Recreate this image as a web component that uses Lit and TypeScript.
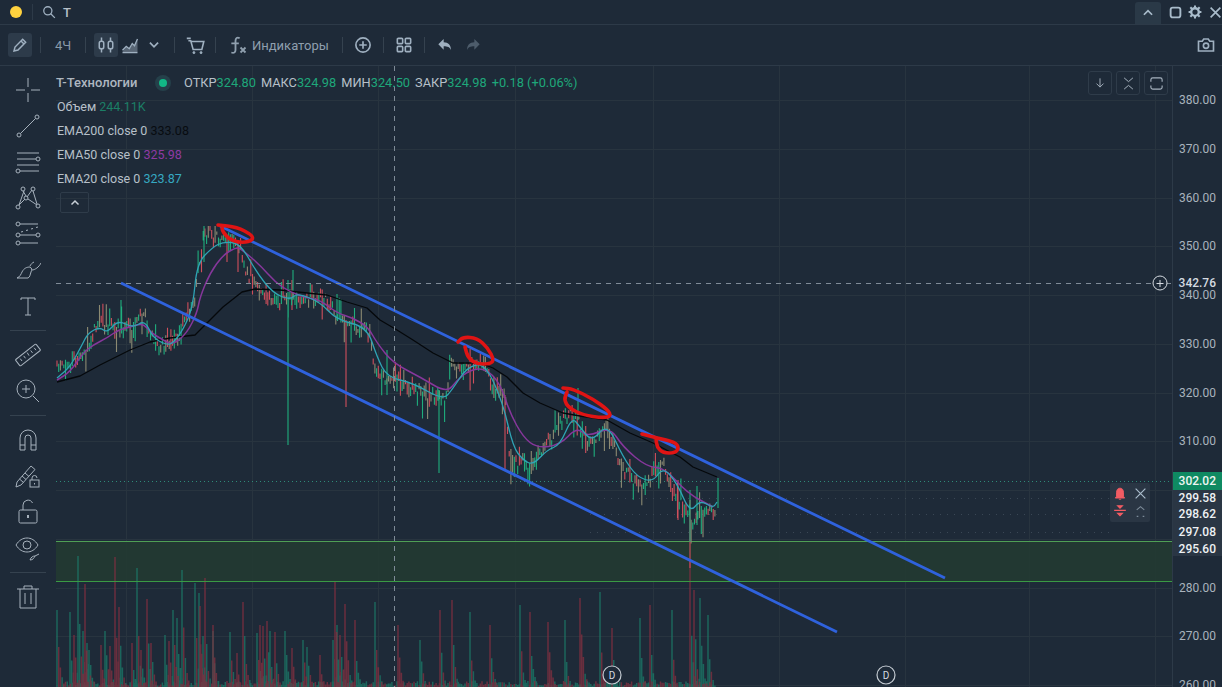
import {LitElement, html, css, svg} from 'lit';
import {customElement} from 'lit/decorators.js';

type Pt = [number, number];

const CHART_X = 56;
const CHART_Y = 66;
const priceY = (p: number) => 100 + (380 - p) * 4.875;

const PRICE: Pt[] = [[57,368],[65,362],[78,360],[86,348],[92,335],[100,322],[110,328],[125,328],[135,325],[140,310],[147,322],[155,340],[165,348],[175,345],[180,330],[187,315],[195,305],[198,270],[203,240],[208,232],[215,238],[225,240],[235,240],[240,245],[245,270],[255,285],[265,295],[280,303],[290,298],[300,303],[313,297],[325,298],[333,310],[345,325],[355,325],[370,335],[375,370],[385,380],[395,380],[410,385],[425,395],[445,400],[452,365],[465,368],[485,360],[490,385],[505,395],[510,460],[525,465],[535,465],[550,440],[570,410],[580,425],[590,445],[605,425],[612,440],[620,465],[635,482],[650,480],[662,460],[670,490],[685,505],[692,520],[705,510],[715,510]];
const EMA200: Pt[] = [[57,382],[80,376],[100,365],[130,350],[150,342],[170,338],[195,335],[205,325],[223,307],[242,292],[255,289],[280,290],[307,293],[327,295],[347,302],[367,308],[380,320],[397,330],[413,340],[433,353],[453,363],[480,363],[493,368],[507,377],[523,393],[540,403],[563,413],[580,416],[607,420],[630,433],[653,443],[680,457],[693,467],[717,477]];
const EMA50: Pt[] = [[57,380],[70,372],[83,353],[93,345],[107,338],[118,330],[130,327],[143,323],[150,332],[163,340],[173,345],[187,333],[197,313],[200,297],[210,273],[223,255],[235,248],[240,248],[260,265],[275,282],[290,292],[307,298],[320,300],[337,313],[353,318],[368,327],[377,343],[393,363],[420,377],[447,393],[457,380],[470,370],[485,368],[500,383],[510,413],[523,437],[537,448],[560,445],[577,427],[587,437],[610,427],[623,447],[647,467],[665,468],[687,493],[713,507]];
const EMA20: Pt[] = [[57,378],[70,367],[82,345],[88,333],[100,327],[107,333],[118,320],[133,328],[145,320],[153,338],[167,345],[173,343],[183,330],[193,307],[197,263],[213,247],[223,242],[240,243],[257,273],[273,293],[290,300],[297,293],[320,302],[337,320],[367,327],[377,357],[387,377],[413,383],[443,400],[452,390],[467,367],[485,363],[503,403],[513,447],[523,460],[533,465],[547,450],[560,445],[572,417],[580,427],[592,442],[607,423],[623,457],[637,477],[653,482],[663,467],[677,483],[690,513],[700,500],[713,508],[717,502]];

const RED_MARKS: Pt[][] = [
  [[218,225],[237,227],[252,235],[253,240],[243,243],[230,240],[223,232],[222,228]],
  [[458,342],[463,337],[477,338],[488,348],[494,360],[490,364],[477,364],[468,358],[465,347]],
  [[563,388],[573,389],[593,399],[608,410],[611,416],[603,418],[583,415],[569,408],[564,400],[567,392]],
  [[642,434],[657,438],[675,442],[679,448],[675,453],[663,453],[657,447],[656,439]],
];

// long wicks that stick out of the candle mass
const SPIKES_UP: [number, number, number][] = [[288,280,445],[293,270,300],[337,294,320],[387,350,395],[439,390,473],[690,490,542],[718,478,508],[697,486,525],[578,388,420],[121,300,330],[204,226,262]];
const SPIKES_DOWN: [number, number, number][] = [[346,320,407],[690,500,568],[292,280,310],[238,240,272],[505,395,470],[678,480,520]];

const VOL_UP: Pt[] = [[57,610],[70,612],[78,556],[83,631],[87,643],[89,650],[105,631],[137,568],[165,635],[173,610],[177,618],[182,570],[195,583],[199,593],[203,636],[213,631],[230,632],[257,633],[270,631],[285,631],[303,640],[307,647],[333,640],[337,625],[375,602],[420,640],[470,612],[520,605],[565,620],[600,592],[640,618],[672,610],[700,598],[708,615]];
const VOL_DOWN: Pt[] = [[74,635],[85,584],[101,645],[110,646],[115,557],[119,607],[132,643],[141,650],[147,599],[151,643],[169,641],[200,606],[205,578],[213,625],[237,653],[243,602],[260,625],[263,626],[267,621],[275,632],[292,648],[320,655],[335,581],[340,635],[345,604],[355,620],[398,625],[440,610],[452,600],[490,625],[530,612],[548,622],[580,598],[612,628],[650,605],[690,560],[694,590]];

const linePath = (pts: Pt[]) => 'M' + pts.map(p => p.join(' ')).join('L');

const smooth = (pts: Pt[]) => {
  let d = `M${pts[0][0]} ${pts[0][1]}`;
  for (let i = 1; i < pts.length; i++) {
    const [x0, y0] = pts[i - 1];
    const [x1, y1] = pts[i];
    d += `Q${x0} ${y0} ${(x0 + x1) / 2} ${(y0 + y1) / 2}`;
  }
  return d + `L${pts[pts.length - 1].join(' ')}`;
};

const rng = (seed: number) => () => {
  seed = (seed * 1664525 + 1013904223) >>> 0;
  return seed / 4294967296;
};

const interp = (pts: Pt[], x: number) => {
  for (let i = 1; i < pts.length; i++) {
    if (x <= pts[i][0]) {
      const t = (x - pts[i - 1][0]) / (pts[i][0] - pts[i - 1][0]);
      return pts[i - 1][1] + t * (pts[i][1] - pts[i - 1][1]);
    }
  }
  return pts[pts.length - 1][1];
};

// highest a wick may reach: the candles stay under the upper channel line
const ceiling = (x: number) => {
  if (x < 190) return 300;
  if (x < 220) return 226;
  const line = 226 + 0.484 * (x - 220);
  return x >= 245 && x < 440 ? line + 14 : line + 2;
};

function buildCandles() {
  const r = rng(7);
  let up = '';
  let down = '';
  let mix = '';
  for (let x = 57; x <= 716; x += 1.7) {
    const c = interp(PRICE, x) + (r() - 0.5) * 11;
    const next = interp(PRICE, x + 3);
    const kind = r();
    const bias = next < c ? 0.5 : 0.2;
    const top = Math.max(ceiling(x), c - 1 - r() * 6 - (r() < 0.18 ? 6 + r() * 12 : 0));
    const bottom = Math.max(top + 2, c + 1 + r() * 6 + (r() < 0.18 ? 6 + r() * 12 : 0));
    const seg = `M${x.toFixed(1)} ${top.toFixed(1)}V${bottom.toFixed(1)}`;
    if (kind < bias) up += seg;
    else if (kind < bias + 0.3) mix += seg;
    else down += seg;
  }
  SPIKES_UP.forEach(([x, a, b]) => (up += `M${x} ${a}V${b}`));
  SPIKES_DOWN.forEach(([x, a, b]) => (down += `M${x} ${a}V${b}`));
  return {up, down, mix};
}

function buildVolume() {
  const r = rng(31);
  let up = '';
  let down = '';
  const bar = (x: number, h: number, isUp: boolean) => {
    const seg = `M${x.toFixed(1)} 687V${(687 - h).toFixed(1)}`;
    if (isUp) up += seg; else down += seg;
  };
  for (let x = 57; x <= 716; x += 1.7) {
    bar(x, 1 + r() * 5, r() < 0.5);
  }
  // every tall bar is followed by a few that fade out
  const cluster = ([x, y]: Pt, isUp: boolean) => {
    let h = 687 - y;
    bar(x, h, isUp);
    for (let k = 1; k < 6 && h > 8; k++) {
      h *= 0.35 + r() * 0.25;
      bar(x + k * 1.7, h, r() < 0.5 ? isUp : !isUp);
    }
  };
  VOL_UP.forEach(p => cluster(p, true));
  VOL_DOWN.forEach(p => cluster(p, false));
  return {up, down};
}

const candles = buildCandles();
const volume = buildVolume();

const GRID_X = [126, 252, 378, 515, 653, 779, 905, 1029, 1155];
const AXIS_PRICES = [380, 370, 360, 350, 340, 330, 320, 310, 280, 270, 260];
const MARKS = [
  {y: 498, text: '299.58'},
  {y: 514, text: '298.62'},
  {y: 532, text: '297.08'},
  {y: 549, text: '295.60'},
];

const ico = (size: number, body: unknown, vb = 24) => html`<svg class="ico" width=${size} height=${size} viewBox="0 0 ${vb} ${vb}">${body}</svg>`;

const LEFT_TOOLS = [
  [svg`<path d="M13 1v9M13 16v9M1 13h9M16 13h9"/>`],
  [svg`<path d="M5.500 20.500 20.500 5.500"/><circle cx="22" cy="4" r="2"/><circle cx="4" cy="22" r="2"/>`],
  [svg`<path d="M2 4h22M2 10h19M2 16h22M5 22h19"/><circle cx="23" cy="10" r="2"/><circle cx="3" cy="22" r="2"/>`],
  [svg`<circle cx="8" cy="4" r="2"/><circle cx="18" cy="4" r="2"/><circle cx="3" cy="22" r="2"/><circle cx="23" cy="21" r="2"/><circle cx="11" cy="13" r="2"/><path d="M8 6l3 5M4 20l6-6M12 12l5-7M9 6 4 20M13 14l9 6M18 6l4 13"/>`],
  [svg`<circle cx="3" cy="3" r="2"/><circle cx="23" cy="14" r="2"/><circle cx="3" cy="14" r="2"/><circle cx="3" cy="22" r="2"/><path d="M5 3h18M5 14h16M5 22h18"/><path d="M6 11l2-.5M11 9.500l2-.5M16 8l2-.5M21 6.500l2-.5"/>`],
  [svg`<path d="M2 21c3-1 4-4 5-6 2-4 5-5 8-5 2 1 2 3 1 5-1 3-1 5-3 6zM15 9c1-2 2-3 4-4M17 13c3 0 7-3 9-7"/>`],
  [svg`<path d="M6 7V5h14v2M13 5v17M10 22h6"/>`],
  null,
  [svg`<rect x="0" y="9" width="26" height="8" rx="1" transform="rotate(-38 13 13)"/><path d="M7 19l-1.800-2.400M10.500 16.300l-1.800-2.400M14 13.600l-1.800-3M17.500 10.900l-1.800-2.400M21 8.200l-1.800-2.400"/>`],
  [svg`<circle cx="11" cy="11" r="9"/><path d="M11 7v8M7 11h8M18 18l6 6"/>`],
  null,
  [svg`<path d="M5 23V11a8 8 0 0 1 16 0v12h-5V11a3 3 0 0 0-6 0v12zM5 18h5M16 18h5"/>`],
  [svg`<path d="M2 19 16 3l4 3.500L6 22l-5 2zM4.500 16l4 3.500M7 13l4 3.500M10 10l4 3.500"/><rect x="15" y="17" width="9" height="7"/><path d="M17 17v-2a2.500 2.500 0 0 1 5 0"/><path d="M19.500 20v1.500"/>`],
  [svg`<rect x="4" y="11" width="18" height="13" rx="1.500"/><path d="M8 11V6a5 5 0 0 1 9.500-2"/><path d="M13 16v3" stroke-width="2"/>`],
  [svg`<path d="M1 10c3-5 7-7 11-7s8 2 11 7c-3 5-7 7-11 7S4 15 1 10z"/><circle cx="12" cy="10" r="4"/><path d="M15 25c1-3 3-4 5-4-1 2-2 4-5 4zM20 21l4-2"/>`],
  null,
  [svg`<path d="M2 5h22M9 5V2h8v3M5 5v19h16V5M10 9v11M16 9v11"/>`],
];

@customElement('chart-canvas')
class ChartCanvas extends LitElement {
  static override styles = css`
    :host {
      display: block;
      position: absolute;
      inset: 0;
    }

    svg {
      display: block;
      width: 100%;
      height: 100%;
    }

    .grid {
      stroke: #28343f;
      stroke-width: 1;
    }

    .mark-label {
      font: 10px 'Roboto', sans-serif;
      fill: #d5dbe1;
      text-anchor: middle;
    }
  `;

  override render() {
    return html`
      <svg viewBox="${CHART_X} ${CHART_Y} 1116 621">
        ${AXIS_PRICES.concat([300, 290]).map(p => svg`<path class="grid" d="M56 ${Math.round(priceY(p)) + 0.5}H1172"/>`)}
        ${GRID_X.map(x => svg`<path class="grid" d="M${x + 0.5} 66V687"/>`)}

        <rect x="56" y="541" width="1116" height="40" fill="#223a32" fill-opacity=".9"/>

        <path d=${volume.up} stroke="#1b7a68" stroke-width="1.5" opacity=".75" fill="none"/>
        <path d=${volume.down} stroke="#7d2f40" stroke-width="1.5" opacity=".8" fill="none"/>

        <path d="M56 541.500H1172" stroke="#4f9f55"/>
        <path d="M56 581.500H1172" stroke="#3a9a44"/>

        <path d="M56 481.500H1172" stroke="#2f8a78" stroke-dasharray="1 3"/>
        <path d="M590 498.500H1110M590 514.500H1110M590 532.500H1110" stroke="#3a4755" stroke-dasharray="1 6"/>

        <path d=${candles.mix} stroke="#8c8a72" stroke-width="1.100" fill="none"/>
        <path d=${candles.down} stroke="#cf4f5c" stroke-width="1.100" fill="none"/>
        <path d=${candles.up} stroke="#1fae7d" stroke-width="1.100" fill="none"/>

        <path d=${linePath(EMA200)} stroke="#05080b" stroke-width="1.300" fill="none" stroke-linejoin="round"/>
        <path d=${smooth(EMA50)} stroke="#86379b" stroke-width="1.500" fill="none"/>
        <path d=${smooth(EMA20)} stroke="#2fa4b5" stroke-width="1.300" fill="none"/>

        <path d="M121 283 837 632M220 226 945 578" stroke="#2f62dd" stroke-width="2.800" fill="none"/>

        ${RED_MARKS.map(m => svg`<path d=${smooth(m)} stroke="#e01414" stroke-width="3.600" fill="none" stroke-linecap="round"/>`)}

        <path d="M394.500 66V687" stroke="#7f8b97" stroke-dasharray="5 5"/>
        <path d="M56 283.500H1172" stroke="#7f8b97" stroke-dasharray="5 5"/>

        <circle cx="612" cy="675" r="9" fill="#1e2a38" stroke="#c3cad1" stroke-width="1.200"/>
        <text class="mark-label" x="612" y="679">D</text>
        <circle cx="886" cy="675" r="9" fill="#1e2a38" stroke="#c3cad1" stroke-width="1.200"/>
        <text class="mark-label" x="886" y="679">D</text>

        <circle cx="1160" cy="283" r="7" fill="#1e2a38" stroke="#d5dbe1"/>
        <path d="M1156.500 283.500h7M1160 280v7" stroke="#d5dbe1"/>
      </svg>
    `;
  }
}

@customElement('app-root')
class AppRoot extends LitElement {
  static override styles = css`
    :host {
      display: flex;
      flex-direction: column;
      width: 1222px;
      height: 687px;
      overflow: hidden;
      background: #1e2a38;
      color: #b7c0c9;
      font-family: 'Roboto', 'Liberation Sans', sans-serif;
    }

    .ico {
      display: block;
      fill: none;
      stroke: currentColor;
    }

    /* top strip */
    .topbar {
      flex: none;
      height: 24px;
      display: flex;
      align-items: center;
      padding-left: 10px;
      border-bottom: 1px solid #2d3a48;
    }

    .dot {
      width: 12px;
      height: 12px;
      border-radius: 50%;
      background: #ffd23f;
    }

    .topbar__sep {
      width: 1px;
      height: 16px;
      margin: 0 9px 0 10px;
      background: #2d3a48;
    }

    .topbar__query {
      margin-left: 7px;
      font-size: 13px;
      font-weight: 500;
      color: #b7c0c9;
    }

    .topbar__search {
      color: #9fb0c0;
      display: flex;
    }

    .topbar__right {
      margin-left: auto;
      margin-right: -3px;
      display: flex;
      align-items: center;
      height: 100%;
      color: #a9bccb;
    }

    .topbar__tab {
      width: 26px;
      height: 22px;
      margin-top: 2px;
      display: flex;
      align-items: center;
      justify-content: center;
      background: #2a3947;
      border-radius: 3px 3px 0 0;
      margin-right: 4px;
    }

    .topbar__btn {
      width: 20px;
      display: flex;
      justify-content: center;
    }

    /* second strip */
    .toolbar {
      flex: none;
      height: 41px;
      box-sizing: border-box;
      display: flex;
      align-items: center;
      gap: 8px;
      padding: 0 4px 0 8px;
      border-bottom: 1px solid #2d3a48;
      color: #9fb0c0;
    }

    .tbtn {
      width: 24px;
      height: 24px;
      flex: none;
      display: flex;
      align-items: center;
      justify-content: center;
      border-radius: 3px;
    }

    .tbtn--on {
      background: #2d3b4a;
    }

    .tbtn--dim {
      color: #4d5c6b;
    }

    .tgroup {
      display: flex;
      align-items: center;
    }

    .tgroup--tight {
      gap: 4px;
    }

    .sep {
      width: 1px;
      height: 16px;
      flex: none;
      background: #35424f;
    }

    .tf {
      width: 28px;
      text-align: center;
      font-size: 13px;
      color: #8a9aa9;
    }

    .indicators {
      display: flex;
      align-items: center;
      gap: 4px;
      padding: 0 5px 0 4px;
      font-size: 13px;
      color: #8f9fae;
    }

    .toolbar__end {
      margin-left: auto;
    }

    /* body */
    .main {
      flex: 1;
      min-height: 0;
      display: flex;
    }

    .tools {
      flex: none;
      width: 56px;
      box-sizing: border-box;
      padding-top: 6px;
      display: flex;
      flex-direction: column;
      align-items: center;
      color: #a6b1bc;
    }

    .tool {
      width: 36px;
      height: 36px;
      flex: none;
      display: flex;
      align-items: center;
      justify-content: center;
    }

    .tools__sep {
      width: 36px;
      height: 1px;
      flex: none;
      margin: 6px 0;
      background: #35424f;
    }

    .chart {
      position: relative;
      flex: 1;
      min-width: 0;
    }

    .legend {
      position: absolute;
      left: 1px;
      top: 5px;
      font-size: 12.5px;
      line-height: 24px;
      color: #b7c0c9;
    }

    .legend__head {
      display: flex;
      align-items: center;
      font-size: 12.8px;
      white-space: nowrap;
    }

    .legend__title {
      font-size: 13px;
      font-weight: 500;
      width: 81px;
      margin-left: -1px;
      color: #aeb7c0;
    }

    .live {
      width: 16px;
      height: 16px;
      margin: 0 13px 0 18px;
      border-radius: 50%;
      background: #25404a;
      display: flex;
      align-items: center;
      justify-content: center;
    }

    .live::after {
      content: '';
      width: 8px;
      height: 8px;
      border-radius: 50%;
      background: #12b886;
    }

    .up {
      color: #1ea77a;
    }

    .stat {
      margin-right: 5px;
    }

    .volume {
      color: #1c7f66;
    }

    .ema200 {
      color: #080c10;
    }

    .ema50 {
      color: #8f3aa3;
    }

    .ema20 {
      color: #36a9c2;
    }

    .collapse {
      width: 29px;
      height: 21px;
      margin: 1px 0 0 3px;
      box-sizing: border-box;
      border: 1px solid #2f3c4a;
      border-radius: 2px;
      display: flex;
      align-items: center;
      justify-content: center;
      color: #c8d0d8;
    }

    .corner {
      position: absolute;
      top: 5px;
      right: 4px;
      display: flex;
      gap: 4px;
      color: #a7b3bf;
    }

    .corner__btn {
      width: 24px;
      height: 24px;
      box-sizing: border-box;
      border: 1px solid #2f3c4a;
      border-radius: 3px;
      display: flex;
      align-items: center;
      justify-content: center;
      background: #1e2a38;
    }

    .float {
      position: absolute;
      left: 1054px;
      top: 417px;
      width: 40px;
      height: 39px;
      padding: 2px 0;
      box-sizing: border-box;
      display: grid;
      grid-template-columns: 1fr 1fr;
      justify-items: center;
      align-items: center;
      background: #2a3644;
      border-radius: 2px;
    }

    .axis {
      position: relative;
      flex: none;
      width: 50px;
      box-sizing: border-box;
      border-left: 1px solid #2d3a48;
      background: #1e2a38;
      font-size: 12px;
      color: #a9b3bd;
    }

    .axis__label {
      position: absolute;
      right: 6px;
      line-height: 16px;
      transform: translateY(-8px);
    }

    .axis__marks {
      position: absolute;
      left: 0;
      right: 0;
      top: 424px;
      height: 66px;
      background: #2a3644;
    }

    .axis__mark {
      color: #eef1f4;
      font-weight: 500;
    }

    .axis__price {
      position: absolute;
      left: 0;
      right: 0;
      top: 406px;
      height: 18px;
      padding-right: 6px;
      box-sizing: border-box;
      line-height: 18px;
      text-align: right;
      background: #0f8a62;
      color: #eef6f2;
      font-weight: 500;
    }

    .axis__cross {
      color: #d5dbe1;
      font-weight: 500;
    }
  `;

  private renderTopbar() {
    return html`
      <div class="topbar">
        <div class="dot"></div>
        <div class="topbar__sep"></div>
        <span class="topbar__search">${ico(14, svg`<circle cx="10" cy="10" r="7" stroke-width="2.200"/><path d="m15 15 7 7" stroke-width="2.200"/>`)}</span>
        <span class="topbar__query">T</span>
        <div class="topbar__right">
          <div class="topbar__tab">${ico(14, svg`<path d="m5 15 7-7 7 7" stroke-width="3"/>`)}</div>
          <div class="topbar__btn">${ico(13, svg`<rect x="3" y="3" width="18" height="18" rx="4" stroke-width="3.500"/>`)}</div>
          <div class="topbar__btn">${ico(14, svg`<circle cx="12" cy="12" r="6.500" stroke-width="4"/><path d="M12 1v4M12 19v4M1 12h4M19 12h4M4 4l3 3M17 17l3 3M4 20l3-3M17 7l3-3" stroke-width="3.500"/>`)}</div>
          <div class="topbar__btn">${ico(13, svg`<path d="m3 3 18 18M21 3 3 21" stroke-width="3"/>`)}</div>
        </div>
      </div>
    `;
  }

  private renderToolbar() {
    return html`
      <div class="toolbar">
        <div class="tbtn tbtn--on">${ico(16, svg`<path d="M3 21l1.500-6L16 3.500l4.500 4.500L9 19.500zM13.500 6l4.500 4.500" stroke-width="2.200"/>`)}</div>
        <div class="sep"></div>
        <div class="tf">4Ч</div>
        <div class="sep"></div>
        <div class="tgroup">
          <div class="tbtn tbtn--on">${ico(18, svg`<rect x="3" y="7" width="6" height="10" rx="2.500" stroke-width="2"/><rect x="15" y="7" width="6" height="10" rx="2.500" stroke-width="2"/><path d="M6 2v5M6 17v5M18 2v5M18 17v5" stroke-width="2"/>`)}</div>
          <div class="tbtn">${ico(18, svg`<path d="M2 19l5-5 4 3 4-7 3 3 4-9M2 22h20" stroke-width="1.800"/><path d="M2 21l5-6 4 3 4-7 3 3 4-8v15H2z" fill="currentColor" fill-opacity=".45" stroke="none"/>`)}</div>
          <div class="tbtn">${ico(14, svg`<path d="m5 8 7 7 7-7" stroke-width="3"/>`)}</div>
        </div>
        <div class="sep"></div>
        <div class="tbtn">${ico(19, svg`<path d="M1 3h5M3 6h3l3 11h11l2.500-10H6" stroke-width="2"/><circle cx="10" cy="21" r="1.300" fill="currentColor"/><circle cx="19" cy="21" r="1.300" fill="currentColor"/>`)}</div>
        <div class="sep"></div>
        <div class="indicators">
          ${ico(20, svg`<path d="M14 4c-3-2-5 0-5 3v11c0 3-2 4-5 3M4 10h9" stroke-width="2.200"/><path d="m15 15 6 6M21 15l-6 6" stroke-width="2.200"/>`)}
          <span>Индикаторы</span>
        </div>
        <div class="sep"></div>
        <div class="tbtn">${ico(18, svg`<circle cx="12" cy="12" r="9.500" stroke-width="2.200"/><path d="M12 7v10M7 12h10" stroke-width="2.200"/>`)}</div>
        <div class="sep"></div>
        <div class="tbtn">${ico(16, svg`<rect x="2" y="2" width="8" height="8" rx="1.500" stroke-width="2.400"/><rect x="14" y="2" width="8" height="8" rx="1.500" stroke-width="2.400"/><rect x="2" y="14" width="8" height="8" rx="1.500" stroke-width="2.400"/><rect x="14" y="14" width="8" height="8" rx="1.500" stroke-width="2.400"/>`)}</div>
        <div class="sep"></div>
        <div class="tgroup tgroup--tight">
          <div class="tbtn">${ico(16, svg`<path d="M10 3v5c7 0 11 4 11 12-2-5-5-6-11-6v5L2 11z" fill="currentColor" stroke="none"/>`)}</div>
          <div class="tbtn tbtn--dim">${ico(16, svg`<path d="M14 3v5C7 8 3 12 3 20c2-5 5-6 11-6v5l8-8z" fill="currentColor" stroke="none"/>`)}</div>
        </div>
        <div class="tbtn toolbar__end">${ico(18, svg`<path d="M2 7h5l2-3h6l2 3h5v13H2z" stroke-width="2.200"/><circle cx="12" cy="13" r="3.500" stroke-width="2.200"/>`)}</div>
      </div>
    `;
  }

  private renderTools() {
    return html`
      <div class="tools">
        ${LEFT_TOOLS.map(t => t
          ? html`<div class="tool">${ico(26, t[0], 26)}</div>`
          : html`<div class="tools__sep"></div>`)}
      </div>
    `;
  }

  private renderLegend() {
    return html`
      <div class="legend">
        <div class="legend__head">
          <span class="legend__title">Т-Технологии</span>
          <span class="live"></span>
          <span>ОТКР</span><span class="up stat">324.80</span>
          <span>МАКС</span><span class="up stat">324.98</span>
          <span>МИН</span><span class="up stat">324.50</span>
          <span>ЗАКР</span><span class="up stat">324.98</span>
          <span class="up">+0.18 (+0.06%)</span>
        </div>
        <div>Объем <span class="volume">244.11K</span></div>
        <div>EMA200 close 0 <span class="ema200">333.08</span></div>
        <div>EMA50 close 0 <span class="ema50">325.98</span></div>
        <div>EMA20 close 0 <span class="ema20">323.87</span></div>
        <div class="collapse">${ico(12, svg`<path d="m5 15 7-7 7 7" stroke-width="3"/>`)}</div>
      </div>
    `;
  }

  private renderOverlays() {
    return html`
      <div class="corner">
        <div class="corner__btn">${ico(14, svg`<path d="M12 4v15M6 13l6 6 6-6" stroke-width="1.600"/>`)}</div>
        <div class="corner__btn">${ico(15, svg`<path d="m5 3 7 6 7-6M5 21l7-6 7 6" stroke-width="1.600"/>`)}</div>
        <div class="corner__btn">${ico(15, svg`<path d="M3 9V6a3 3 0 0 1 3-3h12a3 3 0 0 1 3 3v3M3 15v3a3 3 0 0 0 3 3h12a3 3 0 0 0 3-3v-3" stroke-width="1.800"/>`)}</div>
      </div>
      <div class="float">
        ${ico(14, svg`<path d="M12 2c4 0 6 3 6 8v6l2 3H4l2-3v-6c0-5 2-8 6-8zM10 21h4" fill="#f25c63" stroke="#f25c63" stroke-width="1.500"/>`)}
        ${ico(13, svg`<path d="m3 3 18 18M21 3 3 21" stroke="#a9bccb" stroke-width="2.200"/>`)}
        ${ico(14, svg`<path d="M8 3h8l-4 4zM2 11h20M8 16h8l-4 4z" fill="#f25c63" stroke="#f25c63" stroke-width="2"/>`)}
        ${ico(13, svg`<path d="m5 9 7-6 7 6M5 21h3M16 21h3" stroke="#7c8b99" stroke-width="2"/>`)}
      </div>
    `;
  }

  private renderAxis() {
    return html`
      <div class="axis">
        ${AXIS_PRICES.map(p => html`<div class="axis__label" style="top:${priceY(p) - CHART_Y}px">${p.toFixed(2)}</div>`)}
        <div class="axis__label axis__cross" style="top:${283 - CHART_Y}px">342.76</div>
        <div class="axis__marks"></div>
        ${MARKS.map(m => html`<div class="axis__label axis__mark" style="top:${m.y - CHART_Y}px">${m.text}</div>`)}
        <div class="axis__price">302.02</div>
      </div>
    `;
  }

  override render() {
    return html`
      ${this.renderTopbar()}
      ${this.renderToolbar()}
      <div class="main">
        ${this.renderTools()}
        <div class="chart">
          <chart-canvas></chart-canvas>
          ${this.renderLegend()}
          ${this.renderOverlays()}
        </div>
        ${this.renderAxis()}
      </div>
    `;
  }
}

declare global {
  interface HTMLElementTagNameMap {
    'app-root': AppRoot;
    'chart-canvas': ChartCanvas;
  }
}
